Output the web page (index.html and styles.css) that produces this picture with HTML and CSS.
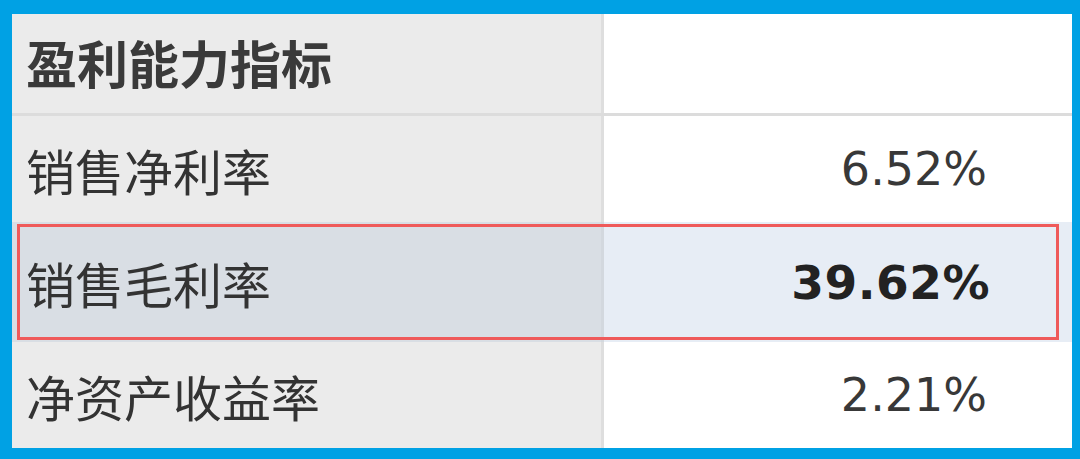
FILE: index.html
```html
<!DOCTYPE html>
<html lang="zh-CN">
<head>
<meta charset="utf-8">
<link rel="stylesheet" href="styles.css">
</head>
<body>
<div class="frame">
  <div class="table">
    <div class="row head">
      <div class="cell label">盈利能力指标</div>
      <div class="cell value"></div>
    </div>
    <div class="row">
      <div class="cell label">销售净利率</div>
      <div class="cell value">6.52%</div>
    </div>
    <div class="row hl">
      <div class="cell label">销售毛利率</div>
      <div class="cell value strong">39.62%</div>
    </div>
    <div class="row last">
      <div class="cell label">净资产收益率</div>
      <div class="cell value">2.21%</div>
    </div>
  </div>
</div>
</body>
</html>
```
FILE: styles.css
```css
html, body {
  margin: 0;
  padding: 0;
}
body {
  width: 1080px;
  height: 459px;
  background: #00a1e4;
  overflow: hidden;
}
.frame {
  padding: 14px 8px 11px 12px;
  height: 459px;
  box-sizing: border-box;
}
.table {
  height: 100%;
  display: grid;
  grid-template-rows: 102px 106px 120px 1fr;
  background: #ffffff;
}
.row {
  display: grid;
  grid-template-columns: 589px 3px 1fr;
  position: relative;
}
.row .label {
  grid-column: 1;
}
.row .value {
  grid-column: 3;
}
.row::before {
  content: "";
  grid-column: 2;
  grid-row: 1;
  background: #dedede;
}
.cell {
  display: flex;
  align-items: center;
}
.label {
  background: #ebebeb;
  padding-left: 14px;
  font-family: "Noto Sans CJK SC", sans-serif;
  font-size: 49px;
  color: #333333;
}
.value {
  background: #ffffff;
  justify-content: flex-end;
  padding-right: 85px;
  font-family: "DejaVu Sans", sans-serif;
  font-size: 46px;
  color: #383838;
}
.head {
  border-bottom: 3px solid #dcdcdc;
}
.head .label {
  font-size: 51px;
  font-weight: 700;
  color: #3a3a3a;
  padding-bottom: 4px;
}
.hl .label {
  background: #d9dee4;
}
.hl .value {
  background: #e7edf5;
}
.hl::before {
  background: #d3d8de;
}
.hl::after {
  content: "";
  position: absolute;
  top: 2px;
  left: 5px;
  right: 13px;
  bottom: 2px;
  border: 3px solid #ef5a5a;
  pointer-events: none;
}
.strong {
  font-weight: 700;
  font-size: 47px;
  color: #222222;
  padding-right: 82px;
  letter-spacing: 0.5px;
}
```
